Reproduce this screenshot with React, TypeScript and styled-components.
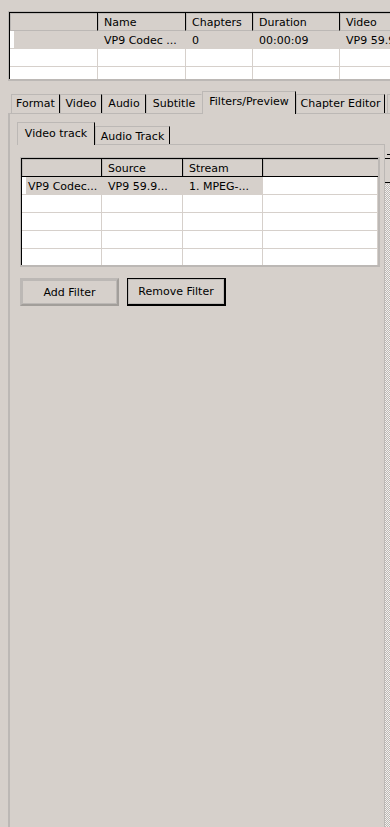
import React from "react";
import styled, { createGlobalStyle } from "styled-components";

const BG = "#d6d0cb";
const EDGE = "#bcb8b5";

const GlobalStyle = createGlobalStyle`
  html, body {
    margin: 0;
    padding: 0;
    background: ${BG};
  }
  body {
    font-family: "DejaVu Sans", Verdana, sans-serif;
    font-size: 11px;
    color: #000;
  }
  #root {
    width: 390px;
    height: 827px;
    overflow: hidden;
  }
`;

const Page = styled.div`
  width: 470px;
  height: 827px;
  box-sizing: border-box;
  padding: 11px 0 0 8px;
  display: flex;
  flex-direction: column;
`;

/* ---------- list views ---------- */

const Frame = styled.div`
  border-top: 1px solid ${EDGE};
  border-left: 1px solid ${EDGE};
  border-right: 2px solid ${EDGE};
  border-bottom: 2px solid ${EDGE};
  align-self: flex-start;
`;

const FrameInner = styled.div<{ $h: number; $w: number }>`
  border-top: 1px solid #000;
  border-left: 1px solid #000;
  width: ${p => p.$w}px;
  height: ${p => p.$h}px;
  overflow: hidden;
  background: #fff;
`;

const Row = styled.div<{ $cols: string }>`
  display: grid;
  grid-template-columns: ${p => p.$cols};
  height: 18px;
`;

const HeadCell = styled.div<{ $darkBottom?: boolean; $last?: boolean }>`
  box-sizing: border-box;
  background: ${BG};
  box-shadow: inset 1px 1px 0 ${EDGE};
  border-right: ${p => (p.$last ? "none" : "1px solid #000")};
  border-bottom: 1px solid ${p => (p.$darkBottom ? "#000" : EDGE)};
  padding: 3px 0 0 6px;
  line-height: 13px;
  white-space: nowrap;
  overflow: hidden;
`;

const Cell = styled.div<{ $sel?: boolean; $first?: boolean }>`
  box-sizing: border-box;
  background: ${p => (p.$sel ? BG : "#fff")};
  box-shadow: ${p => (p.$sel && p.$first ? "inset 4px 0 0 #fff" : "none")};
  border-right: 1px solid ${BG};
  border-bottom: 1px solid ${BG};
  padding: 3px 0 0 6px;
  line-height: 13px;
  white-space: nowrap;
  overflow: hidden;
`;

/* ---------- tabs ---------- */

const TabStrip = styled.div<{ $mt: number; $pl: number }>`
  display: flex;
  align-items: flex-end;
  height: 22px;
  margin-top: ${p => p.$mt}px;
  padding-left: ${p => p.$pl}px;
`;

const Tab = styled.div<{ $w: number; $active?: boolean; $pt: number; $h: number; $noRight?: boolean; $ml?: number }>`
  box-sizing: border-box;
  position: relative;
  z-index: ${p => (p.$active ? 1 : 0)};
  width: ${p => p.$w}px;
  height: ${p => p.$h}px;
  margin-left: ${p => p.$ml || 0}px;
  margin-bottom: ${p => (p.$active ? -1 : 0)}px;
  padding-top: ${p => p.$pt}px;
  background: ${BG};
  border-top: 1px solid ${EDGE};
  border-left: 1px solid ${EDGE};
  border-right: 1px solid ${p => (p.$noRight ? BG : "#000")};
  text-align: center;
  line-height: 13px;
  white-space: nowrap;
  overflow: hidden;
  flex-shrink: 0;
`;

const MainPanel = styled.div`
  flex: 1;
  display: flex;
  flex-direction: column;
  border-top: 1px solid ${EDGE};
  border-left: 2px solid ${EDGE};
  padding: 8px 0 0 7px;
`;

const InnerBody = styled.div`
  flex: 1;
  display: flex;
`;

const InnerPanel = styled.div`
  width: 368px;
  flex-shrink: 0;
  box-sizing: border-box;
  border-top: 1px solid ${EDGE};
  border-right: 1px solid ${EDGE};
  padding: 12px 0 0 3px;
  display: flex;
  flex-direction: column;
`;

/* ---------- buttons ---------- */

const ButtonRow = styled.div`
  display: flex;
  gap: 8px;
  margin-top: 11px;
`;

const Button = styled.button<{ $default?: boolean }>`
  box-sizing: border-box;
  width: 99px;
  height: 28px;
  margin: 0;
  padding: 0;
  font: inherit;
  color: #000;
  background: ${BG};
  border-style: solid;
  border-color: ${p => (p.$default ? "#000" : `${EDGE} #a29e9a #a29e9a ${EDGE}`)};
  border-width: ${p => (p.$default ? "1px 2px 2px 1px" : "2px")};
  box-shadow: inset 0 0 0 1px ${EDGE};
`;

/* ---------- scrollbar ---------- */

const Scrollbar = styled.div`
  width: 17px;
  flex-shrink: 0;
  display: flex;
  flex-direction: column;
  padding-top: 1px;
`;

const ScrollButton = styled.div<{ $h: number }>`
  height: ${p => p.$h}px;
  background: ${BG};
  border-bottom: 1px solid #000;
  flex-shrink: 0;
`;

const ScrollTrack = styled.div`
  flex: 1;
  margin-top: 1px;
  background-color: #dcd8d4;
  background-image: conic-gradient(#f2f0ee 25%, #bdb8b4 0 50%, #f2f0ee 0 75%, #bdb8b4 0);
  background-size: 2px 2px;
`;

const topCols = "88px 88px 67px 87px 120px";
const filterCols = "80px 81px 80px 115px";

export default function App() {
  return (
    <>
      <GlobalStyle />
      <Page>
        <Frame>
          <FrameInner $h={66} $w={450}>
            <Row $cols={topCols}>
              <HeadCell />
              <HeadCell>Name</HeadCell>
              <HeadCell>Chapters</HeadCell>
              <HeadCell>Duration</HeadCell>
              <HeadCell>Video</HeadCell>
            </Row>
            <Row $cols={topCols}>
              <Cell $sel $first />
              <Cell $sel>VP9 Codec ...</Cell>
              <Cell $sel>0</Cell>
              <Cell $sel>00:00:09</Cell>
              <Cell $sel>VP9 59.9...</Cell>
            </Row>
            {[0, 1].map(i => (
              <Row $cols={topCols} key={i}>
                <Cell /><Cell /><Cell /><Cell /><Cell />
              </Row>
            ))}
          </FrameInner>
        </Frame>

        <TabStrip $mt={10} $pl={3}>
          <Tab $w={49} $h={19} $pt={2}>Format</Tab>
          <Tab $w={42} $h={19} $pt={2}>Video</Tab>
          <Tab $w={44} $h={19} $pt={2}>Audio</Tab>
          <Tab $w={56} $h={19} $pt={2} $noRight>Subtitle</Tab>
          <Tab $w={94} $h={23} $pt={3} $active>Filters/Preview</Tab>
          <Tab $w={89} $h={19} $pt={2}>Chapter Editor</Tab>
          <Tab $w={40} $h={19} $pt={2} $ml={2} />
        </TabStrip>

        <MainPanel>
          <TabStrip $mt={0} $pl={0}>
            <Tab $w={78} $h={23} $pt={4} $active>Video track</Tab>
            <Tab $w={75} $h={18} $pt={3}>Audio Track</Tab>
          </TabStrip>
          <InnerBody>
            <InnerPanel>
              <Frame>
                <FrameInner $h={106} $w={356}>
                  <Row $cols={filterCols}>
                    <HeadCell $darkBottom />
                    <HeadCell $darkBottom>Source</HeadCell>
                    <HeadCell $darkBottom>Stream</HeadCell>
                    <HeadCell $darkBottom $last />
                  </Row>
                  <Row $cols={filterCols}>
                    <Cell $sel $first>VP9 Codec...</Cell>
                    <Cell $sel>VP9 59.9...</Cell>
                    <Cell $sel>1. MPEG-...</Cell>
                    <Cell />
                  </Row>
                  {[0, 1, 2, 3].map(i => (
                    <Row $cols={filterCols} key={i}>
                      <Cell /><Cell /><Cell /><Cell />
                    </Row>
                  ))}
                </FrameInner>
              </Frame>
              <ButtonRow>
                <Button>Add Filter</Button>
                <Button $default>Remove Filter</Button>
              </ButtonRow>
            </InnerPanel>
            <Scrollbar>
              <ScrollButton $h={13}>
                <svg width="17" height="13" viewBox="0 0 17 13">
                  <line x1="2" y1="9.5" x2="9" y2="9.5" stroke="#000" strokeWidth="1" />
                </svg>
              </ScrollButton>
              <ScrollButton $h={23} />
              <ScrollTrack />
            </Scrollbar>
          </InnerBody>
        </MainPanel>
      </Page>
    </>
  );
}
